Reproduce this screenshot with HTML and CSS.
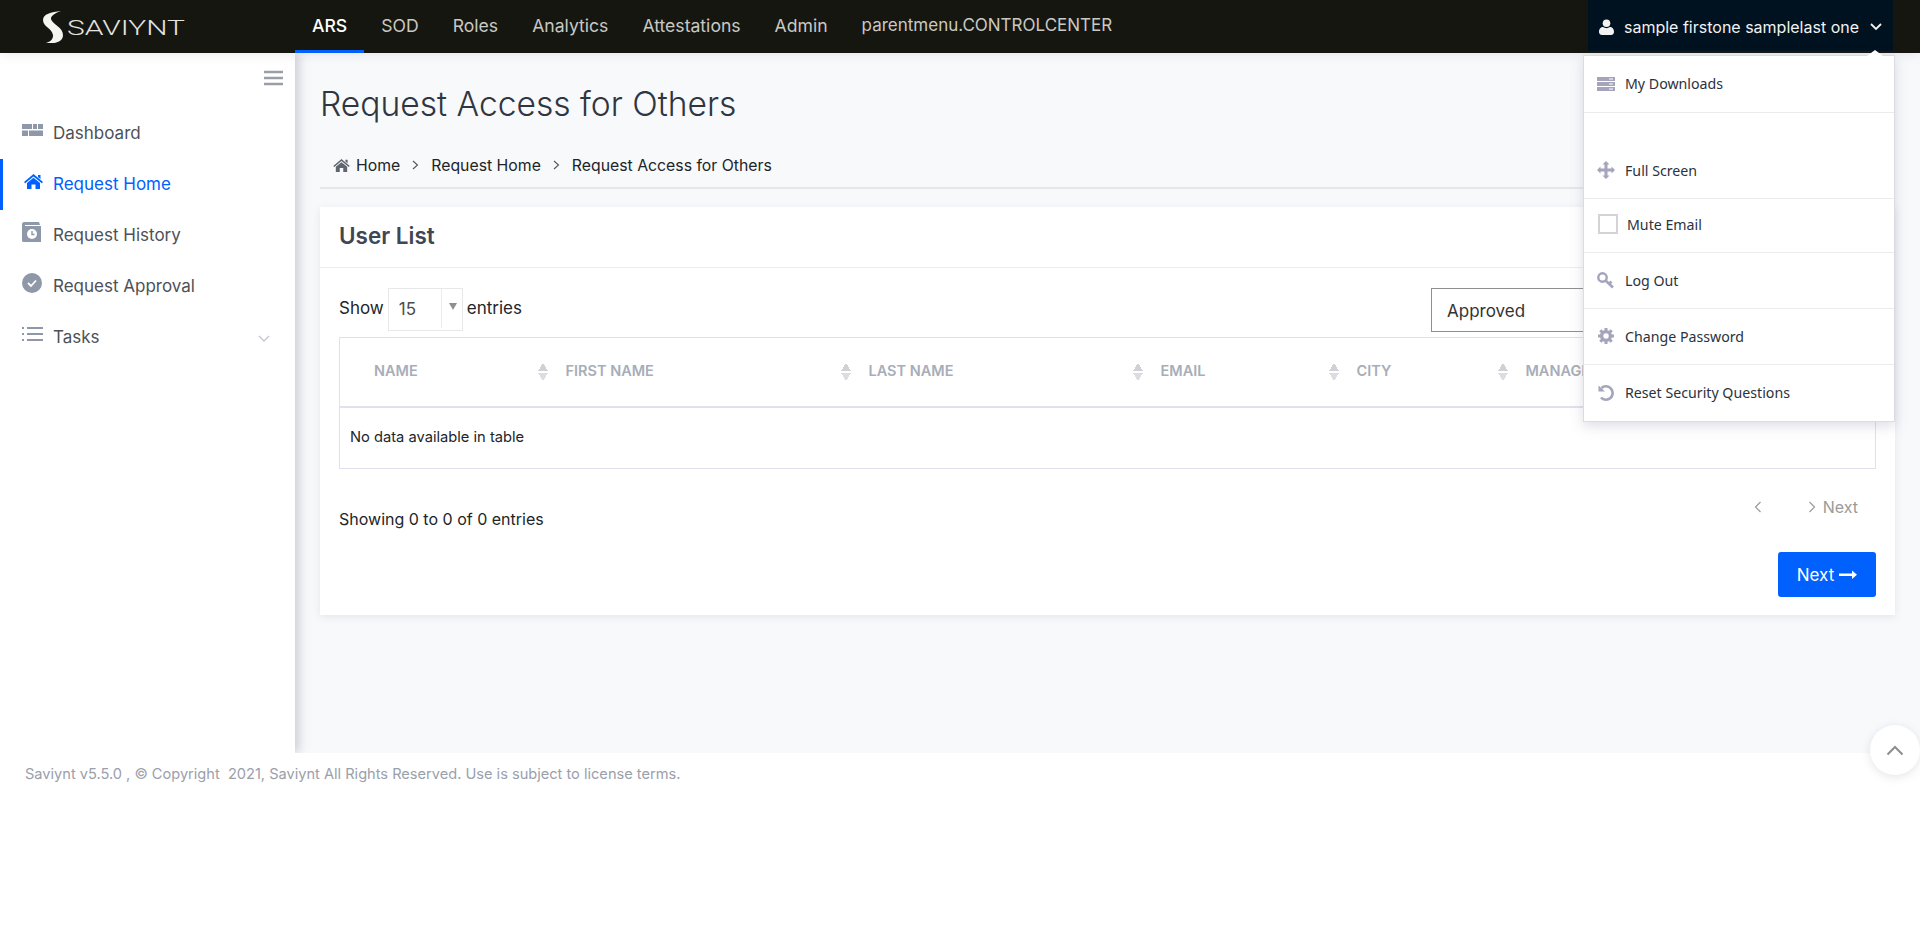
FILE: index.html
```html
<!DOCTYPE html>
<html lang="en">
<head>
	<meta charset="utf-8">
	<title>Request Access for Others</title>
	<link rel="stylesheet" href="styles.css">
</head>
<body>
	<header class="topbar">
		<a class="logo">
			<svg class="logo_mark" width="20" height="32" viewBox="0 0 20 32"><path fill="#f4f4f0" d="M18 0 C8 1 0 3 0 9 C0 16 9 17 10 24 C10.500 28 7 31 3 32 C12 33 20 31 20 24 C20 16 9 13 8 8 C7.500 5 12 2 18 0Z"/></svg>
			<svg class="logo_word" width="122" height="24" viewBox="0 0 122 24"><text x="0" y="18" textLength="118" lengthAdjust="spacingAndGlyphs">SAVIYNT</text></svg>
		</a>
		<nav class="topnav">
			<a class="topnav_item topnav_active">ARS</a>
			<a class="topnav_item">SOD</a>
			<a class="topnav_item">Roles</a>
			<a class="topnav_item">Analytics</a>
			<a class="topnav_item">Attestations</a>
			<a class="topnav_item">Admin</a>
			<a class="topnav_item topnav_long">parentmenu.CONTROLCENTER</a>
		</nav>
		<div class="usermenu">
			<svg width="15" height="16" viewBox="0 0 15 16"><circle cx="7.500" cy="4.200" r="3.800" fill="#f2f2f2"/><path fill="#f2f2f2" d="M0 13 C0 9.500 2 8 4 8 C6 9.500 9 9.500 11 8 C13 8 15 9.500 15 13 C15 15 13.500 16 12 16 H3 C1.500 16 0 15 0 13Z"/></svg>
			<span class="usermenu_name">sample firstone samplelast one</span>
			<svg width="12" height="8" viewBox="0 0 12 8"><path d="M1 1 L6 6 L11 1" fill="none" stroke="#f2f2f2" stroke-width="1.800"/></svg>
		</div>
	</header>

	<div class="layout">
		<aside class="sidebar">
			<div class="sidebar_toggle">
				<svg width="19" height="16" viewBox="0 0 19 16"><path d="M0 2 H19 M0 8 H19 M0 14 H19" stroke="#9a9ea6" stroke-width="2.600"/></svg>
			</div>
			<ul class="sidemenu">
				<li class="sidemenu_item">
					<svg class="sidemenu_icon" width="21" height="12" viewBox="0 0 21 12"><path fill="#8f98a8" d="M0 0 H10 V5 H0Z M11 0 H15 V5 H11Z M16 0 H21 V5 H16Z M0 6.500 H6 V12 H0Z M7 6.500 H21 V12 H7Z"/></svg>
					Dashboard
				</li>
				<li class="sidemenu_item sidemenu_active">
					<svg class="sidemenu_icon" width="19" height="16" viewBox="0 0 19 16"><path fill="#0061fe" d="M9.500 1 L19 9 L17.800 10.200 L9.500 3.400 L1.200 10.200 L0 9Z M3 10 L9.500 4.800 L16 10 V16 H11.500 V11.500 H7.500 V16 H3Z M14 2 H16.500 V6 L14 4Z"/></svg>
					Request Home
				</li>
				<li class="sidemenu_item">
					<svg class="sidemenu_icon" width="19" height="20" viewBox="0 0 19 20"><path fill="#8f98a8" d="M2 0 H17 L18 3 H3 V4 H19 V20 H2 C1 20 0 20 0 18 V2 C0 1 1 0 2 0Z"/><circle cx="10" cy="12" r="5" fill="#fff"/><path d="M10 9 V12.500 H12.500" fill="none" stroke="#8f98a8" stroke-width="1.400"/></svg>
					Request History
				</li>
				<li class="sidemenu_item">
					<svg class="sidemenu_icon" width="20" height="20" viewBox="0 0 20 20"><circle cx="10" cy="10" r="10" fill="#8f98a8"/><path d="M6 10 L9 13 L14 7.500" fill="none" stroke="#fff" stroke-width="1.800"/></svg>
					Request Approval
				</li>
				<li class="sidemenu_item">
					<svg class="sidemenu_icon" width="21" height="16" viewBox="0 0 21 16"><path stroke="#8f98a8" stroke-width="1.800" d="M0 2 H2 M5 2 H21 M0 8 H2 M5 8 H21 M0 14 H2 M5 14 H21"/></svg>
					Tasks
					<svg class="sidemenu_caret" width="12" height="8" viewBox="0 0 12 8"><path d="M1 1 L6 6 L11 1" fill="none" stroke="#c3c7ce" stroke-width="1.300"/></svg>
				</li>
			</ul>
		</aside>

		<main class="content">
			<h1 class="page_title">Request Access for Others</h1>
			<div class="crumbs">
				<svg width="17" height="14" viewBox="0 0 19 16"><path fill="#5f6670" d="M9.500 1 L19 9 L17.800 10.200 L9.500 3.400 L1.200 10.200 L0 9Z M3 10 L9.500 4.800 L16 10 V16 H11.500 V11.500 H7.500 V16 H3Z M14 2 H16.500 V6 L14 4Z"/></svg>
				<span class="crumb_first">Home</span>
				<svg class="crumb_sep" width="7" height="10" viewBox="0 0 7 10"><path d="M1 1 L5.500 5 L1 9" fill="none" stroke="#555" stroke-width="1.100"/></svg>
				<span>Request Home</span>
				<svg class="crumb_sep" width="7" height="10" viewBox="0 0 7 10"><path d="M1 1 L5.500 5 L1 9" fill="none" stroke="#555" stroke-width="1.100"/></svg>
				<span>Request Access for Others</span>
			</div>

			<section class="card">
				<div class="card_head">User List</div>
				<div class="card_body">
					<div class="table_tools">
						<div class="length_control">
							Show
							<span class="length_select">
								<span class="length_value">15</span>
								<span class="length_arrow"></span>
							</span>
							entries
						</div>
						<div class="status_select">Approved</div>
					</div>

					<table class="user_table">
						<thead>
							<tr>
								<th class="col_name">NAME<span class="sorter"></span></th>
								<th class="col_first">FIRST NAME<span class="sorter"></span></th>
								<th class="col_last">LAST NAME<span class="sorter"></span></th>
								<th class="col_email">EMAIL<span class="sorter"></span></th>
								<th class="col_city">CITY<span class="sorter"></span></th>
								<th class="col_manager">MANAGER</th>
							</tr>
						</thead>
						<tbody>
							<tr><td colspan="6">No data available in table</td></tr>
						</tbody>
					</table>

					<div class="table_foot">
						<div class="table_info">Showing 0 to 0 of 0 entries</div>
						<div class="pager">
							<svg width="8" height="12" viewBox="0 0 8 12"><path d="M6.500 1 L1.500 6 L6.500 11" fill="none" stroke="#9a9a9a" stroke-width="1.200"/></svg>
							<svg class="pager_next" width="8" height="12" viewBox="0 0 8 12"><path d="M1.500 1 L6.500 6 L1.500 11" fill="none" stroke="#9a9a9a" stroke-width="1.200"/></svg>
							<span>Next</span>
						</div>
					</div>

					<div class="card_actions">
						<button class="next_button">Next
							<svg width="18" height="10" viewBox="0 0 18 10"><path fill="#fff" d="M0 3.500 H13 V0.500 L18 4.800 L13 9 V6 H0Z"/></svg>
						</button>
					</div>
				</div>
			</section>
		</main>
	</div>

	<footer class="footer">Saviynt v5.5.0 , &copy; Copyright&nbsp; 2021, Saviynt All Rights Reserved. Use is subject to license terms.</footer>

	<div class="dropdown">
		<span class="dropdown_tip"></span>
		<div class="dropdown_row row_downloads">
			<svg width="18" height="14" viewBox="0 0 18 14"><path fill="#a4a4bc" d="M0 0 H18 V4 H0Z M0 5 H18 V9 H0Z M0 10 H18 V14 H0Z"/><path stroke="#fff" stroke-width="1" d="M12 2 H16 M12 7 H16 M12 12 H16"/></svg>
			My Downloads
		</div>
		<div class="dropdown_row row_fullscreen">
			<svg width="18" height="18" viewBox="0 0 18 18"><path fill="#a4a4bc" d="M9 0 L12.500 3.500 H10.500 V7.500 H14.500 V5.500 L18 9 L14.500 12.500 V10.500 H10.500 V14.500 H12.500 L9 18 L5.500 14.500 H7.500 V10.500 H3.500 V12.500 L0 9 L3.500 5.500 V7.500 H7.500 V3.500 H5.500Z"/></svg>
			Full Screen
		</div>
		<div class="dropdown_row row_mute">
			<span class="mute_box"></span>
			Mute Email
		</div>
		<div class="dropdown_row">
			<svg width="18" height="17" viewBox="0 0 18 17"><circle cx="5.500" cy="5.500" r="4.200" fill="none" stroke="#a4a4bc" stroke-width="2.400"/><path d="M8.500 8.500 L16 15.500 M12 12 L14.500 9.500" fill="none" stroke="#a4a4bc" stroke-width="2.600"/></svg>
			Log Out
		</div>
		<div class="dropdown_row">
			<svg width="16" height="16" viewBox="0 0 16 16"><circle cx="8" cy="8" r="4.400" fill="none" stroke="#a4a4bc" stroke-width="3.400"/><path stroke="#a4a4bc" stroke-width="3" d="M8 0 V3 M8 13 V16 M0 8 H3 M13 8 H16 M2.300 2.300 L4.400 4.400 M11.600 11.600 L13.700 13.700 M2.300 13.700 L4.400 11.600 M11.600 4.400 L13.700 2.300"/></svg>
			Change Password
		</div>
		<div class="dropdown_row">
			<svg width="16" height="16" viewBox="0 0 16 16"><path d="M3.500 3 A6.700 6.700 0 1 1 3 12.500" fill="none" stroke="#a4a4bc" stroke-width="2.600"/><path fill="#a4a4bc" d="M0.500 0.500 L7 6.500 H0.500Z"/></svg>
			Reset Security Questions
		</div>
	</div>

	<div class="to_top">
		<svg width="18" height="11" viewBox="0 0 18 11"><path d="M1.500 9.500 L9 2 L16.500 9.500" fill="none" stroke="#8d8d8d" stroke-width="2"/></svg>
	</div>
</body>
</html>
```
FILE: styles.css
```css
* {
	box-sizing: border-box;
}

html, body {
	margin: 0;
	padding: 0;
}

body {
	height: 942px;
	overflow: hidden;
	background-color: #fff;
	font-family: "Inter", "Roboto", "Liberation Sans", sans-serif;
	font-size: 16px;
	color: #212529;
}

.topbar {
	position: relative;
	z-index: 2;
	display: flex;
	height: 53px;
	background-color: #161610;
	box-shadow: 0 2px 10px rgba(120, 125, 150, 0.15);
}

.logo {
	display: flex;
	align-items: center;
	width: 295px;
	padding-left: 43px;
}

.logo_mark {
	flex: none;
}

.logo_word {
	flex: none;
	margin: 5px 0 0 4px;
	font-family: "Roboto", sans-serif;
	font-size: 19.500px;
	font-weight: 300;
	fill: #e4e4e0;
}

.topnav {
	display: flex;
	flex: 1;
}

.topnav_item {
	display: flex;
	align-items: center;
	height: 53px;
	padding: 0 17px 3px;
	font-size: 17.600px;
	color: #c9c9c4;
}

.topnav_long {
	font-size: 17px;
}

.topnav_active {
	color: #fff;
	font-weight: 500;
	border-bottom: 3px solid #0061fe;
	padding-bottom: 0;
}

.usermenu {
	display: flex;
	align-items: center;
	width: 305px;
	height: 51px;
	margin-right: 27px;
	padding: 2px 0 0 11px;
	background-color: #00111f;
	font-size: 16px;
	color: #f2f2f2;
}

.usermenu_name {
	margin: 0 11px 0 10px;
}

.layout {
	display: flex;
	height: 700px;
}

.sidebar {
	position: relative;
	width: 295px;
	background-color: #fff;
	box-shadow: 4px 0 10px rgba(120, 125, 150, 0.35);
}

.sidebar_toggle {
	display: flex;
	justify-content: flex-end;
	padding: 17px 12px 0 0;
	height: 42px;
}

.sidemenu {
	list-style: none;
	margin: 0;
	padding: 13px 0 0;
}

.sidemenu_item {
	position: relative;
	display: flex;
	align-items: center;
	height: 51px;
	padding: 0 0 2px 53px;
	font-size: 17px;
	color: #4e5157;
}

.sidemenu_icon {
	position: absolute;
	left: 22px;
	top: 50%;
	transform: translateY(-50%);
	margin-top: -4px;
}

.sidemenu_active {
	color: #0061fe;
	border-left: 3px solid #0061fe;
	padding-left: 50px;
}

.sidemenu_active .sidemenu_icon {
	left: 21px;
}

.sidemenu_caret {
	position: absolute;
	right: 25px;
	top: 23px;
}

.content {
	flex: 1;
	padding: 0 25px;
	background-color: #f8f9fb;
}

.page_title {
	margin: 0;
	padding: 28px 0 0;
	height: 85px;
	font-size: 33.600px;
	line-height: 46px;
	font-weight: 300;
	color: #2f3640;
}

.crumbs {
	display: flex;
	align-items: center;
	height: 51px;
	padding: 5px 0 0 13px;
	border-bottom: 2px solid #e6e7ea;
	font-size: 15.800px;
	color: #212529;
}

.crumb_first {
	margin-left: 6px;
}

.crumb_sep {
	margin: 0 12px;
}

.card {
	margin-top: 18px;
	height: 408px;
	background-color: #fff;
	box-shadow: 0 2px 8px rgba(120, 125, 150, 0.15);
}

.card_head {
	height: 61px;
	padding: 14px 19px 0;
	border-bottom: 1px solid #ecedf2;
	font-size: 22.500px;
	line-height: 30px;
	font-weight: 600;
	color: #3f4654;
}

.card_body {
	padding: 0 19px;
}

.table_tools {
	display: flex;
	justify-content: space-between;
	height: 69px;
	padding-top: 20px;
}

.length_control {
	display: flex;
	align-items: flex-start;
	line-height: 41px;
	font-size: 17px;
}

.length_select {
	display: flex;
	width: 75px;
	height: 43px;
	margin: 0 4px;
	border: 1px solid #e8e8ea;
	background-color: #fff;
}

.length_value {
	width: 53px;
	padding-left: 10px;
	border-right: 1px solid #ececee;
	margin-bottom: 2px;
	color: #4c4c4c;
}

.length_arrow {
	width: 0;
	height: 0;
	margin: 14px 0 0 7px;
	border-left: 4px solid transparent;
	border-right: 4px solid transparent;
	border-top: 7px solid #8f8f8f;
}

.status_select {
	width: 445px;
	height: 44px;
	padding-left: 15px;
	border: 1px solid #8f8f8f;
	line-height: 45px;
	font-size: 17px;
	color: #333;
}

.user_table {
	width: 100%;
	border-collapse: collapse;
	table-layout: fixed;
	border: 1px solid #dfe1ee;
}

.user_table th {
	position: relative;
	height: 69px;
	padding: 0 0 3px 16px;
	border-bottom: 2px solid #dfe1ee;
	text-align: left;
	font-size: 14.500px;
	font-weight: 600;
	color: #a7adb9;
}

.user_table .col_name {
	width: 210px;
	padding-left: 34px;
}

.col_first { width: 303px; }
.col_last { width: 292px; }
.col_email { width: 196px; }
.col_city { width: 169px; }

.sorter {
	position: absolute;
	right: 2px;
	top: 25px;
	width: 10px;
	height: 18px;
	background-image:
		linear-gradient(to bottom right, transparent 50%, #cfd1d6 50%),
		linear-gradient(to bottom left, transparent 50%, #cfd1d6 50%),
		linear-gradient(to top right, transparent 50%, #dcdde0 50%),
		linear-gradient(to top left, transparent 50%, #dcdde0 50%);
	background-size: 5px 8px;
	background-repeat: no-repeat;
	background-position: 0 0, 5px 0, 0 10px, 5px 10px;
}

.user_table td {
	height: 62px;
	padding: 0 10px 2px;
	font-size: 14.700px;
	color: #212529;
}

.table_foot {
	display: flex;
	justify-content: space-between;
	height: 83px;
	font-size: 16px;
}

.table_info {
	padding-top: 40px;
}

.pager {
	display: flex;
	align-items: center;
	height: 76px;
	padding-right: 18px;
	color: #9a9a9a;
}

.pager_next {
	margin: 0 7px 0 46px;
}

.card_actions {
	display: flex;
	justify-content: flex-end;
}

.next_button {
	display: flex;
	align-items: center;
	justify-content: center;
	gap: 5px;
	width: 98px;
	height: 45px;
	border: 0;
	border-radius: 3px;
	background-color: #0061fe;
	font-family: "Inter", sans-serif;
	font-size: 17px;
	color: #fff;
}

.footer {
	position: relative;
	z-index: 1;
	height: 189px;
	padding: 12px 25px;
	background-color: #fff;
	font-size: 14.600px;
	color: #9aa0ab;
}

/* opened user menu and the scroll button lie over the page */
.dropdown {
	position: absolute;
	z-index: 3;
	left: 1583px;
	top: 55px;
	width: 312px;
	background-color: #fff;
	border: 1px solid #dcdce0;
	box-shadow: 0 4px 12px rgba(120, 125, 150, 0.25);
	font-family: "Noto Sans", sans-serif;
	font-size: 14.200px;
	color: #2b323d;
}

.dropdown_tip {
	position: absolute;
	right: 11px;
	top: -6px;
	width: 0;
	height: 0;
	border-left: 8px solid transparent;
	border-right: 8px solid transparent;
	border-bottom: 6px solid #fff;
}

.dropdown_row {
	display: flex;
	align-items: center;
	gap: 10px;
	height: 56px;
	padding: 0 0 1px 13px;
	border-bottom: 1px solid #ececee;
}

.dropdown_row:last-child {
	border-bottom: 0;
}

.dropdown_row svg {
	flex: none;
	width: 18px;
}

.row_downloads {
	height: 57px;
}

.row_fullscreen {
	height: 86px;
	padding-top: 38px;
	padding-bottom: 9px;
}

.row_mute {
	height: 54px;
	gap: 9px;
	padding-left: 14px;
	padding-bottom: 3px;
}

.mute_box {
	width: 20px;
	height: 20px;
	border: 2px solid #d4d4d6;
}

.to_top {
	position: absolute;
	z-index: 3;
	left: 1870px;
	top: 725px;
	display: flex;
	align-items: center;
	justify-content: center;
	width: 50px;
	height: 50px;
	border-radius: 50%;
	background-color: #fff;
	box-shadow: 0 2px 10px rgba(120, 125, 150, 0.2);
}
```
